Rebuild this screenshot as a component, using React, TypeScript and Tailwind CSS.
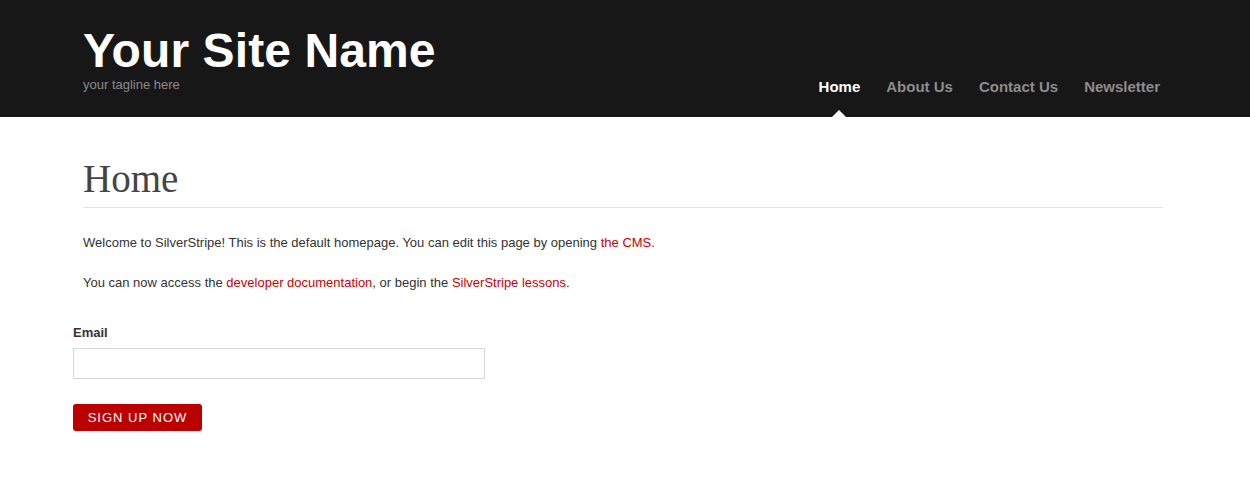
export default function App() {
  const navItems = ["Home", "About Us", "Contact Us", "Newsletter"];

  return (
    <div className="min-h-screen bg-white font-['Liberation_Sans',Arial,sans-serif] text-[13px] text-[#333]">
      <header className="h-[117px] bg-[#171717]">
        <div className="mx-auto flex h-full w-[1104px] items-end justify-between pl-[10px] pr-[17px]">
          <div className="self-start pt-[27px]">
            <h1 className="text-[48px] leading-[48px] font-bold tracking-[0.1px] text-white">Your Site Name</h1>
            <p className="mt-[2px] text-[13px] leading-[16px] text-[#8a8a8a]">your tagline here</p>
          </div>

          <nav className="flex gap-[26px] pb-[20px]">
            {navItems.map((item, i) => (
              <a
                key={item}
                href="#"
                className={
                  i === 0
                    ? "relative text-[15px] leading-[20px] font-bold text-white"
                    : "text-[15px] leading-[20px] font-bold text-[#8c8c8c]"
                }
              >
                {item}
                {i === 0 && (
                  <span className="absolute bottom-[-20px] left-1/2 -ml-[7px] h-0 w-0 border-x-[7px] border-b-[7px] border-x-transparent border-b-white" />
                )}
              </a>
            ))}
          </nav>
        </div>
      </header>

      <main className="mx-auto w-[1104px] pr-[14px]">
        <div className="pl-[10px]">
          <h2 className="mt-[38px] border-b border-[#e3e3e3] pb-[5px] font-['Liberation_Serif','Times_New_Roman',serif] text-[39px] leading-[47px] text-[#444]">
            Home
          </h2>

          <p className="mt-[25px] leading-[20px]">
            Welcome to SilverStripe! This is the default homepage. You can edit this page by opening{" "}
            <a href="#" className="text-[#c00]">the CMS</a>.
          </p>
          <p className="mt-[20px] leading-[20px]">
            You can now access the{" "}
            <a href="#" className="text-[#c00]">developer documentation</a>, or begin the{" "}
            <a href="#" className="text-[#c00]">SilverStripe lessons</a>.
          </p>
        </div>

        <form className="mt-[30px] flex flex-col items-start">
          <label htmlFor="email" className="text-[13px] leading-[20px] font-bold text-[#333]">
            Email
          </label>
          <input
            id="email"
            type="email"
            className="mt-[5px] h-[31px] w-[412px] border border-[#d6d6d6] bg-white px-2 outline-none"
          />
          <button
            type="button"
            className="mt-[25px] h-[27px] w-[129px] rounded-[3px] bg-[#bb0000] text-[13px] tracking-[1px] text-white uppercase"
          >
            Sign up now
          </button>
        </form>
      </main>
    </div>
  );
}
